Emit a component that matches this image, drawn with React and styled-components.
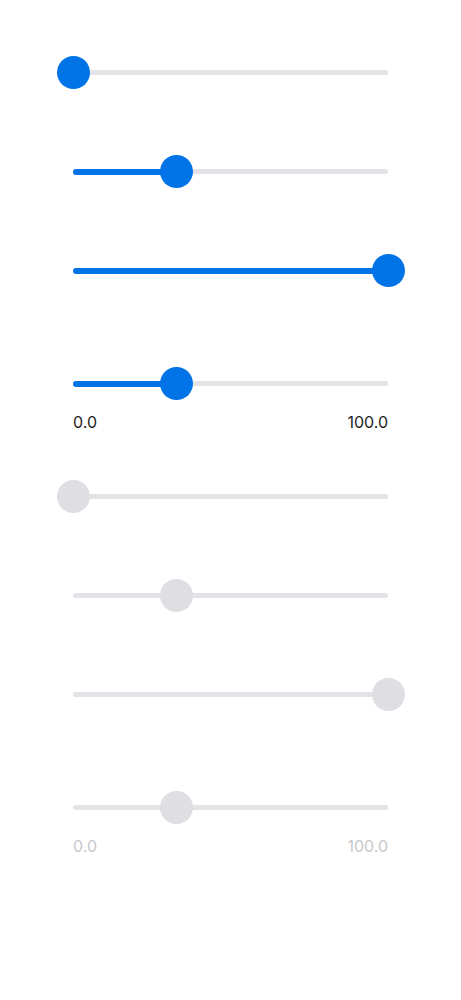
import React from "react";
import styled, { createGlobalStyle } from "styled-components";

const GlobalStyle = createGlobalStyle`
  html, body {
    margin: 0;
    padding: 0;
    background: #fff;
  }
  body {
    font-family: Inter, "Noto Sans", "Liberation Sans", sans-serif;
  }
`;

const BLUE = "#0073e6";
const TRACK = "#e3e3e8";
const THUMB_OFF = "#dedee3";

const Page = styled.div`
  display: flex;
  flex-direction: column;
  padding: 56px 0 0 73px;
  width: 315px;
`;

const Range = styled.div`
  position: relative;
  height: 33px;
  margin-top: ${(p) => p.$top || 0}px;
  display: flex;
  align-items: center;
`;

const Track = styled.div`
  position: relative;
  width: 100%;
  height: 5px;
  border-radius: 3px;
  background: ${TRACK};
`;

const Fill = styled.div`
  position: absolute;
  left: 0;
  top: -0.5px;
  height: 6px;
  border-radius: 3px;
  background: ${BLUE};
`;

// thumb sits over the track, centred on the value point
const Thumb = styled.div`
  position: absolute;
  top: 0;
  width: 33px;
  height: 33px;
  margin-left: -16.5px;
  border-radius: 50%;
  background: ${(p) => (p.$disabled ? THUMB_OFF : BLUE)};
`;

const Labels = styled.div`
  display: flex;
  justify-content: space-between;
  margin-top: 12px;
  font-size: 16px;
  line-height: 20px;
  color: ${(p) => (p.$disabled ? "#c7c7cc" : "#1c1c1e")};
`;

function Slider({ value, disabled, top }) {
  const pct = value * 100 + "%";
  return (
    <Range $top={top}>
      <Track>{!disabled && <Fill style={{ width: pct }} />}</Track>
      <Thumb $disabled={disabled} style={{ left: pct }} />
    </Range>
  );
}

function Group({ disabled, top }) {
  return (
    <>
      <Slider value={0} disabled={disabled} top={top} />
      <Slider value={0.33} disabled={disabled} top={66} />
      <Slider value={1} disabled={disabled} top={66} />
      <Slider value={0.33} disabled={disabled} top={80} />
      <Labels $disabled={disabled}>
        <span>0.0</span>
        <span>100.0</span>
      </Labels>
    </>
  );
}

export default function App() {
  return (
    <>
      <GlobalStyle />
      <Page>
        <Group />
        <Group disabled top={48} />
      </Page>
    </>
  );
}
